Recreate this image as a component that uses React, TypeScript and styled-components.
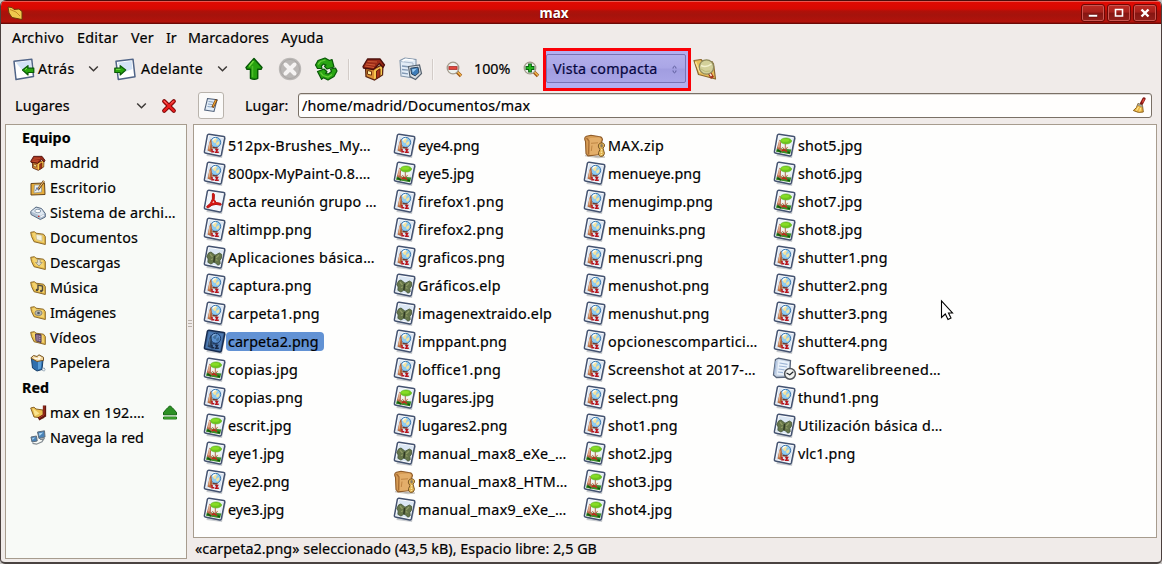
import React from "react";
import styled, { createGlobalStyle } from "styled-components";

const Global = createGlobalStyle`
  *, *::before, *::after { box-sizing: border-box; }
  body { margin: 0; background: #c9c6c4; overflow: hidden; }
  svg { display: block; flex: none; }
`;

const Window = styled.div`
  width: 1162px;
  height: 564px;
  display: flex;
  flex-direction: column;
  background: #f0ebe9;
  border: 1px solid #4a3f3d;
  border-top: 0;
  border-bottom: 2px solid #4a4341;
  border-radius: 6px 6px 5px 5px;
  overflow: hidden;
  font-family: "Noto Sans", "Open Sans", sans-serif;
  font-size: 14.3px;
  line-height: 20px;
  color: #000;
  -webkit-text-stroke: 0.2px currentColor;
`;

const TitleBar = styled.header`
  height: 24px;
  flex: none;
  display: flex;
  align-items: center;
  padding: 1px 5px 0 6px;
  background: linear-gradient(#4a0c0a 0 1px, #e9574f 1px 2px, #e00a02 2px, #d60a03 9px, #b01009 11px, #a5130c 15px, #b4120b 22px, #7a0a06 23px, #5e0805 24px);
`;

const Title = styled.h1`
  flex: 1;
  margin: 0;
  padding-left: 6px;
  text-align: center;
  color: #fff;
  font-size: 13.5px;
  line-height: 20px;
  font-weight: 700;
  -webkit-text-stroke: 0;
  text-shadow: 0 1px 1px #500;
`;

const WindowButton = styled.button`
  width: 24px;
  height: 18px;
  padding: 0;
  margin: 0 0 0 2px;
  position: relative;
  left: 1px;
  display: flex;
  align-items: center;
  justify-content: center;
  border: 1px solid #6d0805;
  border-radius: 3px;
  background: linear-gradient(#bf2b24, #a8211b 45%, #861511 50%, #94201b);
  box-shadow: inset 0 0 0 1px #cb5751;
`;

const MenuBar = styled.nav`
  height: 28px;
  flex: none;
  display: flex;
  align-items: center;
  padding-left: 11px;
`;

const Toolbar = styled.div`
  height: 36px;
  flex: none;
  display: flex;
  align-items: center;
  padding-bottom: 2px;
`;

const LocationRow = styled.div`
  height: 36px;
  flex: none;
  display: flex;
  align-items: center;
  padding-bottom: 1px;
`;

const Text = styled.span<{ $w?: number; $ls?: number; $ml?: number }>`
  flex: none;
  white-space: pre;
  width: ${(p) => (p.$w ? `${p.$w}px` : "auto")};
  margin-left: ${(p) => p.$ml ?? 0}px;
  letter-spacing: ${(p) => p.$ls ?? 0}px;
`;

const Slot = styled.span<{ $ml: number; $w: number }>`
  flex: none;
  display: flex;
  justify-content: center;
  width: ${(p) => p.$w}px;
  margin-left: ${(p) => p.$ml}px;
`;

const Divider = styled.i<{ $ml: number }>`
  width: 2px;
  height: 21px;
  margin-left: ${(p) => p.$ml}px;
  border-left: 1px solid #d3ccc8;
  border-right: 1px solid #f8f5f4;
`;

const Highlight = styled.div`
  width: 148px;
  height: 43px;
  flex: none;
  margin-left: 3px;
  padding: 3px 2px 3px 0;
  border: 3px solid #fb0007;
  background: #b3aff0;
`;

const ViewSelect = styled.div`
  height: 29px;
  width: 140px;
  display: flex;
  align-items: center;
  padding-top: 2px;
  border: 1px solid #7873b5;
  border-radius: 2px;
  background: linear-gradient(#b2aeea, #aaa6e6 48%, #a19de0 52%, #a9a5e6);
  color: #06063f;
`;

const EditToggle = styled.button`
  width: 26px;
  height: 27px;
  padding: 0;
  margin-left: 21px;
  display: flex;
  align-items: center;
  justify-content: center;
  border: 1px solid #b9b3ac;
  border-radius: 3px;
  background: #fbfaf9;
`;

const PathField = styled.div`
  width: 854px;
  height: 25px;
  margin-left: 9px;
  display: flex;
  align-items: center;
  justify-content: space-between;
  padding: 0 4px 0 3px;
  border: 1px solid #7a7066;
  border-radius: 3px;
  background: #fffefd;
  box-shadow: inset 0 1px 0 #dedad6;
`;

const Body = styled.div`
  flex: 1;
  min-height: 0;
  display: flex;
  padding: 0 4px 0 4px;
`;

const Sidebar = styled.aside`
  width: 182px;
  height: 435px;
  border: 1px solid #a79c8e;
  background: #f8faf7;
`;

const Heading = styled.h2`
  height: 25px;
  margin: 0;
  padding-left: 16px;
  font-size: 14.3px;
  line-height: 25px;
  font-weight: 700;
  letter-spacing: 0;
`;

const Place = styled.div`
  height: 25px;
  display: flex;
  align-items: center;
  padding-left: 24px;
`;

const Splitter = styled.div`
  width: 6px;
  height: 399px;
  display: flex;
  flex-direction: column;
  justify-content: center;
  align-items: center;
  gap: 2px;
`;

const Grip = styled.i`
  width: 4px;
  height: 1px;
  background: #b9b1aa;
`;

const Content = styled.main`
  flex: 1;
  display: flex;
  flex-direction: column;
`;

const FilePane = styled.section`
  height: 414px;
  display: flex;
  padding: 7px 0 0 8px;
  border: 1px solid #a79c8e;
  background: #fefefd;
`;

const FileColumn = styled.div`
  width: 190px;
  flex: none;
`;

const FileRow = styled.div`
  height: 28px;
  display: flex;
  align-items: center;
`;

const FileName = styled.span<{ $ls: number; $selected?: boolean }>`
  height: 19px;
  line-height: 19px;
  padding: 0 5px 0 2px;
  margin: 0 0 1px -1px;
  white-space: pre;
  border-radius: 4px;
  letter-spacing: ${(p) => p.$ls}px;
  background: ${(p) => (p.$selected ? "#6292d4" : "transparent")};
`;

const Status = styled.footer`
  height: 22px;
  line-height: 22px;
  padding-left: 2px;
  letter-spacing: 0.05px;
`;

const Pointer = styled.svg`
  position: absolute;
  left: 940px;
  top: 299px;
`;

/* ---------- file icons, 25 x 26 ---------- */

const Sheet = ({ children, dark }: { children?: React.ReactNode; dark?: boolean }) => (
  <svg width="25" height="26" viewBox="0 0 25 26">
    <path d="M7.500 2.500 24 5 20 25 4.500 23Z" fill="#8b929c" opacity=".45" />
    <path d="M7 1.200 21.800 3.500Q23 3.800 22.700 5L19.300 21.900Q19 23.100 17.800 22.900L3.300 20.100Q2.200 19.800 2.400 18.700L5.400 2.200Q5.800 1.100 7 1.200Z" fill={dark ? "#426a9b" : "#fff"} stroke={dark ? "#172c50" : "#435270"} strokeWidth="1.500" />
    <path d="M7 2.900 21.200 5 18 21.300 4 18.700Z" fill={dark ? "#4e7bb4" : "#dbe7f4"} />
    {children}
  </svg>
);

const PngIcon = ({ dark }: { dark?: boolean }) => (
  <Sheet dark={dark}>
    <circle cx="13.700" cy="9.300" r="5" fill={dark ? "#5b91d0" : "#8ecbf2"} stroke={dark ? "#183765" : "#3f78ad"} strokeWidth="1" />
    <path d="M11 6.500l2.500-1.200 2 .7-1.500 2 .5 1.500-2 .5-1.500-1.500zM14 10.500l2.500-2.500 1 2-1.500 2.500-1.500-.5z" fill={dark ? "#43719f" : "#f3e3a0"} />
    <path d="M10.500 7.500q1-2 3.200-2.200" stroke={dark ? "#8ab0da" : "#fff"} fill="none" strokeWidth="1.200" />
    <path d="M9 5.500 7.500 9 5.500 17.500l3.300 1.500 1.700-3.500-.8-5z" fill={dark ? "#28405d" : "#b5653a"} />
    <path d="M8 9.500 7 16.500" stroke={dark ? "#526c8a" : "#e6b083"} strokeWidth="1.300" />
    <path d="M10.500 14.500 14.500 15l1-.6" stroke={dark ? "#243c5f" : "#6b3a2a"} fill="none" strokeWidth="1.300" />
    <path d="M10 16v2.700h2.300M13.200 16.500h2.300l-1.500 2.700h2.800" stroke={dark ? "#192944" : "#b8141b"} fill="none" strokeWidth="1.600" />
  </Sheet>
);

const JpgIcon = () => (
  <Sheet>
    <path d="M7 3.500 20.500 5.500 19 13 5 14z" fill="#eff7fa" />
    <path d="M5 15 19.300 16.500 18 21.300 4 18.700z" fill="#3c8f26" />
    <path d="M9.500 12.500l9 .5-.6 2.800-8-.4z" fill="#f3f3e4" />
    <ellipse cx="14" cy="8" rx="5.600" ry="3" fill="#6cc51e" stroke="#5cb01a" strokeWidth=".6" />
    <ellipse cx="13.200" cy="7.300" rx="4" ry="1.500" fill="#86dc25" />
    <path d="M7.500 6.500 9 10 8.800 15l3 2.500-1.500 1-5.500-3z" fill="#b9694a" />
    <path d="M7.500 8 6.800 14.500" stroke="#e9ba97" strokeWidth="1.300" />
    <path d="M13.300 11v5m-3-2 3 3.500 2.200-3.500" stroke="#b06a50" fill="none" strokeWidth="1" />
    <path d="M10 18.200l2-1.500 3 2" stroke="#c3281d" fill="none" strokeWidth="1.500" />
    <path d="M5.500 17l3.500 2.200m6.500-.2 2.500.8" stroke="#15570e" strokeWidth="1.500" />
  </Sheet>
);

const PdfIcon = () => (
  <Sheet>
    <path d="M7 2.900 21.200 5 18 21.300 4 18.700Z" fill="#f1f5fa" />
    <path d="M10.400 4.700q1.500-1 2 .8l-.2 5 2 3 4.500.8q1.300 1 0 1.900l-4.700-.8-4 .8-3.700 2.600q-1.800.2-1.600-1.300l3.700-3.200 2-4.300z" fill="#d91410" stroke="#b31411" />
    <path d="M11.300 12l-.9 1.700 2-.2z" fill="#fff" />
  </Sheet>
);

const ElpIcon = () => (
  <Sheet>
    <path d="M6.500 8l2.500-1 3.500 2.800 1.300.2 3.500-2 2.500 1.500-.5 4-1.500 2 .4 3.200-2.200 1.500-3-2.700-1.300-.2-2.800 1.700-3-1.700.3-3.300-1.300-2.500z" fill="#66764a" stroke="#48593a" strokeWidth=".9" />
    <path d="M8 9l2.500 3m6.500-2-3 3m-5 1.800 2-1m4.500 1.700-1.500-1" stroke="#919c67" strokeWidth="1.200" />
    <path d="M12.600 11l-.7 6" stroke="#313a25" strokeWidth="1.500" />
  </Sheet>
);

const ZipIcon = () => (
  <svg width="25" height="26" viewBox="0 0 25 26">
    <path d="M3 22.500l13 2 7-.5" stroke="#a9a49a" strokeWidth="1.500" opacity=".6" />
    <path d="M3.500 8.500Q1.500 4.500 4.500 3.300L9 2.200 16.500 3.500Q20 3.500 20.500 6.500L19.500 9.500 18.500 21.500 6 22.800 4 20.500z" fill="#d69c55" stroke="#8f5b28" strokeWidth="1.100" />
    <path d="M7.500 9.500Q5.500 6 8.500 5l8-.5q3 .3 2.500 2.500L17.500 9.500 16.800 21 7.800 22z" fill="#e3ae6a" />
    <path d="M4.500 5l2.500 3-.5 13.500" stroke="#a96d33" fill="none" strokeWidth="1.300" />
    <path d="M9 10.300l7-.5M10 12.500 9.300 18" stroke="#c08643" fill="none" />
    <path d="M16.500 11.500q4-3.500 6 0 .6 2-1.500 3.500l1.500 5.500q-.7 3.500-4 3-2.800-1-2-4l1.500-3q-2.500-2.500-1.500-5z" fill="#e0b252" stroke="#7d5826" />
    <ellipse cx="19.600" cy="12.800" rx="1.300" ry="1.700" fill="#8a7c62" />
    <path d="M19.500 16v6" stroke="#fae69d" strokeWidth="1.500" strokeDasharray="1.500 1" />
  </svg>
);

const DocIcon = () => (
  <svg width="25" height="26" viewBox="0 0 25 26">
    <path d="M3.500 2.500 6.500 1.200 18.500 3.500 17.500 20l-13 .5-3-2.500z" fill="#c8d5e6" stroke="#59667b" strokeWidth="1.300" />
    <path d="M6.500 3l10.700 2-1.300 13.500-11-1z" fill="#eaf2fb" />
    <path d="M7.500 6l8 1.300M7 9l8 1M6.500 12l6 .8M6 15l5 .6M4 4l-1.500 13" stroke="#9db4d4" strokeWidth="1.200" />
    <circle cx="18" cy="16.800" r="5.400" fill="#f3f4f1" stroke="#505459" strokeWidth="1.500" />
    <path d="M14.500 16l3.300 1.800 3.500-3" fill="none" stroke="#24282d" strokeWidth="1.200" />
  </svg>
);

/* ---------- toolbar icons ---------- */

const Chevron = () => (
  <svg width="11" height="8" viewBox="0 0 11 8">
    <path d="M1.200 1.500 5.500 5.700 9.800 1.500" fill="none" stroke="#3d3937" strokeWidth="1.500" />
  </svg>
);

const BackIcon = () => (
  <svg width="22" height="23" viewBox="0 0 22 23">
    <path d="M1 3.300 18.800 1.200 20.500 18.500 3 21.500Z" fill="#fff" stroke="#506487" strokeWidth="1.500" strokeLinejoin="round" />
    <path d="M2.800 4.500 17.500 2.800 18.500 12 10 13z" fill="#d3e3f6" />
    <path d="M9.500 12 15 7.700v2.500h5.800v4.300H15V17z" fill="#29a70e" stroke="#0a5b06" strokeWidth="1.200" strokeLinejoin="round" />
    <path d="M12 11.700l2-1.500" stroke="#7de050" />
  </svg>
);

const ForwardIcon = () => (
  <svg width="22" height="23" viewBox="0 0 22 23">
    <path d="M2 3.300 19 1.200 21 18.800 4.300 21.500Z" fill="#fff" stroke="#506487" strokeWidth="1.500" strokeLinejoin="round" />
    <path d="M3.800 4.700 17.500 3 18.500 11 8 15z" fill="#d3e3f6" />
    <path d="M11.700 12 6.200 7.700v2.500H.800v4.300h5.400V17z" fill="#29a70e" stroke="#0a5b06" strokeWidth="1.200" strokeLinejoin="round" />
    <path d="M2 11.300h4.500" stroke="#7de050" />
  </svg>
);

const UpIcon = () => (
  <svg width="18" height="24" viewBox="0 0 18 24">
    <path d="M9 1.500 17 10.500 16 12.300h-3.300v9q-3.500 2-7.200 0v-9H2L1 10.500z" fill="#27a20f" stroke="#075806" strokeWidth="1.500" strokeLinejoin="round" />
    <path d="M8.500 4 4 9.500" stroke="#72d83e" strokeWidth="1.500" />
    <path d="M7.500 9V20" stroke="#4dbb29" strokeWidth="1.500" />
  </svg>
);

const StopIcon = () => (
  <svg width="24" height="24" viewBox="0 0 24 24">
    <circle cx="12" cy="12" r="11.200" fill="#bab7b5" />
    <circle cx="12" cy="12" r="9.500" fill="none" stroke="#aaa6a4" />
    <path d="M7.500 7.500 16.500 16.500M16.500 7.500 7.500 16.500" stroke="#f5f3f2" strokeWidth="4" strokeLinecap="round" />
  </svg>
);

const ReloadIcon = () => (
  <svg width="24" height="24" viewBox="0 0 24 24">
    <g fill="#29a513" stroke="#075806" strokeWidth="1.200" strokeLinejoin="round">
      <path d="M1.500 8 4 3.500 11 1 15.500 3.500 18 2.500 20 10 13 12 10.500 9.300 12 8 9.500 7 7.300 9 8 11.500 3.500 11.500z" />
      <path d="M23 14 20 19.500 14 23 9.500 20.800 7.500 22.300 3.500 14.500 10 12 13 14.800 11.500 16.300 14.500 17 17.500 14.500 16.500 12 21.500 11z" />
    </g>
    <path d="M4 7.500 6.500 4.500l5-1.500M6.500 15.500l2.500 3 5 1.500 4-2.500" stroke="#68cc3a" strokeWidth="1.200" fill="none" />
  </svg>
);

const HomeIcon = ({ size = 24 }: { size?: number }) => (
  <svg width={size} height={size} viewBox="0 0 24 24">
    <path d="M3.500 10 11 12 21 7.500l-.5 10.500-8 5L4 19.500z" fill="#d98f35" stroke="#5b2510" strokeWidth="1.300" />
    <path d="M12 13.500 20 9V17.500l-8 4.700z" fill="#f7c94f" />
    <path d="M1 9.500 5.500 2h12.500l4.500 6-1.500 2.500L17.500 6.500l-6 6L1.500 11z" fill="#9a2a18" stroke="#4c100b" strokeWidth="1.300" strokeLinejoin="round" />
    <path d="M5.500 4.500 15 5M4 7l9 1.200M3 9l9 1.500" stroke="#cd5a36" strokeWidth="1.200" />
    <path d="M5.500 13.500l4 1v3.700l-4-1z" fill="#fff1a0" stroke="#70310d" />
    <path d="M14.500 14 18 11.800v7.700l-3.500 2z" fill="#a83318" stroke="#68200d" />
  </svg>
);

const ComputerIcon = () => (
  <svg width="25" height="24" viewBox="0 0 25 24">
    <path d="M2 3.500 7 1l11 1.500v15L15 21l-12-2z" fill="#e2ecf6" stroke="#8396ab" strokeWidth="1.100" />
    <path d="M2.500 4.500 15 6v14" stroke="#a9bacd" fill="none" />
    <path d="M4 9l8 1M4 12.500l6 .7M4 16l6 .8" stroke="#8299b4" strokeWidth="1.300" />
    <path d="M4.500 4 7.500 2.300l8 1" stroke="#fff" fill="none" strokeWidth="1.500" />
    <path d="M10.500 9.500 21.500 8 23.500 16.500 17.500 22.500 12 19.500z" fill="#d9dee2" stroke="#56626f" strokeWidth="1.200" />
    <path d="M12.700 11.200 20 10.200 21 15.500 17.200 18.800 13.600 17z" fill="#3d7cb8" stroke="#29445e" />
    <path d="M14 12.200l5-.6-4.300 4z" fill="#9bccf2" />
  </svg>
);

const ZoomIcon = ({ plus }: { plus?: boolean }) => (
  <svg width="17" height="17" viewBox="0 0 17 17">
    <path d="M10.500 10.500 15 15" stroke="#9c5515" strokeWidth="3.300" />
    <path d="M11.500 11 15 14.500" stroke="#f5b84c" strokeWidth="1.600" />
    <circle cx="7" cy="7" r="5.800" fill="#edf2ee" stroke="#a29b8c" strokeWidth="1.300" />
    {plus ? (
      <>
        <path d="M7 2.500v9M2.500 7h9" stroke="#0a6210" strokeWidth="3.800" />
        <path d="M7 3.500v7M3.500 7h7" stroke="#23b61d" strokeWidth="2" />
      </>
    ) : (
      <>
        <path d="M2.500 7h9" stroke="#a61b18" strokeWidth="3.600" />
        <path d="M3.300 7h7.400" stroke="#f05548" strokeWidth="1.600" />
      </>
    )}
  </svg>
);

const SearchFolderIcon = () => (
  <svg width="24" height="24" viewBox="0 0 24 24">
    <path d="M1 3.500 8 2.500 10.500 5 19 4.500 20.500 7 22.500 22 5.500 17.500z" fill="#e9c05a" stroke="#8d672c" strokeWidth="1.200" strokeLinejoin="round" />
    <path d="M2.500 5 7 15.500" stroke="#fbe49a" strokeWidth="1.500" />
    <path d="M16.500 16 19.500 21" stroke="#a5351f" strokeWidth="3.600" />
    <path d="M16.800 16.500 18.500 19" stroke="#f6ead8" strokeWidth="1.500" />
    <circle cx="13.500" cy="10" r="7.200" fill="#d3d09a" stroke="#8e8a5e" strokeWidth="1.300" />
    <path d="M8 8.500q5 2.500 10.500-1.500" stroke="#f4f1cf" strokeWidth="1.500" fill="none" />
    <path d="M8 12q4 4 9 2" stroke="#bcbd78" fill="none" />
  </svg>
);

const CloseIcon = () => (
  <svg width="16" height="16" viewBox="0 0 16 16">
    <path d="M3.200 3.200 12.800 12.800M12.800 3.200 3.200 12.800" stroke="#7f0909" strokeWidth="4.200" strokeLinecap="round" />
    <path d="M3.200 3.200 12.800 12.800M12.800 3.200 3.200 12.800" stroke="#ec1f1f" strokeWidth="2.300" strokeLinecap="round" />
    <path d="M3 2.800 6 5.800M12.500 3 10 5.500" stroke="#ff9790" strokeWidth=".8" />
  </svg>
);

const NoteIcon = () => (
  <svg width="16" height="17" viewBox="0 0 16 17">
    <path d="M4.500 1.500 14 2.700 11 14.500 1.700 13z" fill="#e2edf8" stroke="#52637c" strokeWidth="1.100" />
    <path d="M5.500 4.500l5 .7M5 7l4.500.6M4.500 9.500l4 .5" stroke="#87a1c0" />
    <path d="M13.500 2.500 9.500 10.500" stroke="#6b3c10" strokeWidth="2.600" />
    <path d="M13 3.200 10 9.500" stroke="#efa535" strokeWidth="1.300" />
  </svg>
);

const BroomIcon = () => (
  <svg width="15" height="17" viewBox="0 0 15 17">
    <path d="M12 1.800 9.500 6.500" stroke="#831a16" strokeWidth="3.200" strokeLinecap="round" />
    <path d="M12 2 10.500 5.500" stroke="#e3483a" strokeWidth="1.400" />
    <path d="M6 6.500l4.500 2 .8 6.500q-5 1.500-10-1.500 3.700-2 4.700-7z" fill="#edb746" stroke="#8e6521" />
    <path d="M6 6.500l4.500 2v1.700L5.500 8z" fill="#b9b8ac" stroke="#756e60" strokeWidth=".5" />
    <path d="M6.500 10 4.500 13.500m4-2.500-.7 3.500" stroke="#fff0a0" />
  </svg>
);

/* ---------- sidebar icons, 16 x 16 ---------- */

const FolderIcon = ({ children }: { children?: React.ReactNode }) => (
  <svg width="16" height="16" viewBox="0 0 16 16">
    <path d="M.700 2.300 4.500 1.700 6 3.200 13.500 4.200 15.300 6.500V14.500L4 11.700 1.500 6.500z" fill="#e8bd49" stroke="#8d6a2b" strokeLinejoin="round" />
    <path d="M2 3.500 4.500 2.800 6 4.400 13 5.300 14.200 12.700 5.500 10.500z" fill="#f3d373" />
    {children}
  </svg>
);

const DesktopIcon = () => (
  <svg width="16" height="16" viewBox="0 0 16 16">
    <path d="M1 3.500 14.500 3 15 14.500 1 15z" fill="#e5ac3b" stroke="#694519" />
    <path d="M4.500 5h7v7L4 13z" fill="#eef0ea" stroke="#8a9293" strokeWidth=".7" />
    <path d="M14 1 8 9.500" stroke="#704519" strokeWidth="2.300" />
    <path d="M14 1 8.500 8.500" stroke="#f5cb82" />
    <path d="M5.500 11l1.500-3.500 1.500 3" stroke="#667cad" fill="none" />
  </svg>
);

const DriveIcon = () => (
  <svg width="16" height="16" viewBox="0 0 16 16">
    <path d="M.700 6.500 6 2 11.500 3.500 15.300 8.500V12l-5 2.500L1 9.500z" fill="#b0c0d2" stroke="#596b82" strokeLinejoin="round" />
    <path d="M1.300 6.500 6 3l5.200 1.300 3 4.200-4 2.200z" fill="#e0e9f2" />
    <ellipse cx="7.800" cy="6" rx="3" ry="1.700" fill="#fff" stroke="#8ea0b3" />
    <path d="M10.500 12l3.500-2" stroke="#f3f6f9" strokeWidth="1.200" />
    <path d="M8 11.300h1.500" stroke="#cb2f27" strokeWidth="1.300" />
  </svg>
);

const TrashIcon = () => (
  <svg width="16" height="18" viewBox="0 0 16 18">
    <path d="M1.500 5 13 6l-1 9.500-5 1.500-4.500-3z" fill="#2f6fae" stroke="#173f6b" />
    <path d="M8 7l3.500-.5-.7 8-2.800 1z" fill="#5c9fd8" />
    <path d="M.800 4 3.500 1.500 7 2.500 9 .800l4.500 2.500v3L7 7.500z" fill="#f2d69b" stroke="#775323" />
    <path d="M4 4l4 1 3-1.500M9 2v4" stroke="#fff" fill="none" />
    <path d="M12 14.500q3-1.500 3 1t-3 .5" stroke="#97a8b8" fill="none" />
  </svg>
);

const RemoteIcon = () => (
  <svg width="17" height="16" viewBox="0 0 17 16">
    <path d="M.700 3 4 2.200 6 4l7 1 .5 8L4 12z" fill="#eac052" stroke="#886124" />
    <path d="M3 3.500 9.500 8.500 5 11z" fill="#fae48f" />
    <path d="M14.500 .500v10L8.500 14" stroke="#60170f" strokeWidth="3.300" fill="none" />
    <path d="M14 1v9L9 13" stroke="#b53625" fill="none" />
  </svg>
);

const NetworkIcon = () => (
  <svg width="16" height="16" viewBox="0 0 16 16">
    <path d="M7.500 2 14.500.800 15 7 9 8.500z" fill="#4a83b8" stroke="#5f6d7b" />
    <path d="M9 3.300l4.200-.8L9.500 6z" fill="#add8f5" />
    <path d="M1 7l5.500-1 .7 5L2 12z" fill="#4a83b8" stroke="#5f6d7b" />
    <path d="M2.300 8l3-.6-2.800 2.500z" fill="#add8f5" />
    <path d="M10 9.500l4-.8-2 3-5.500 2.500-4-.8" fill="none" stroke="#838b91" strokeWidth="1.200" />
  </svg>
);

const EjectIcon = () => (
  <svg width="16" height="16" viewBox="0 0 16 16">
    <path d="M8 1q1.200 0 6.500 6.500v2.300h-13V7.500Q6.800 1 8 1z" fill="#2c8f24" stroke="#0c5f09" strokeLinejoin="round" />
    <path d="M1.500 12h13v2h-13z" fill="#50bc39" stroke="#20791a" />
  </svg>
);

type Kind = "png" | "jpg" | "pdf" | "elp" | "zip" | "doc";

const fileIcons: Record<Kind, React.ComponentType> = {
  png: PngIcon,
  jpg: JpgIcon,
  pdf: PdfIcon,
  elp: ElpIcon,
  zip: ZipIcon,
  doc: DocIcon,
};

/* name, kind, letter spacing where it differs from the default */
const columns: [string, Kind, number?][][] = [
  [
    ["512px-Brushes_My…", "png", 0.34],
    ["800px-MyPaint-0.8.…", "png", 0.14],
    ["acta reunión grupo …", "pdf", 0.24],
    ["altimpp.png", "png"],
    ["Aplicaciones básica…", "elp", 0.32],
    ["captura.png", "png"],
    ["carpeta1.png", "png"],
    ["carpeta2.png", "png", 0.12],
    ["copias.jpg", "jpg"],
    ["copias.png", "png"],
    ["escrit.jpg", "jpg"],
    ["eye1.jpg", "jpg", 0],
    ["eye2.png", "png", 0],
    ["eye3.jpg", "jpg", 0],
  ],
  [
    ["eye4.png", "png", 0],
    ["eye5.jpg", "jpg", 0],
    ["firefox1.png", "png", 0.38],
    ["firefox2.png", "png", 0.38],
    ["graficos.png", "png", 0.28],
    ["Gráficos.elp", "elp", 0.28],
    ["imagenextraido.elp", "elp"],
    ["imppant.png", "png"],
    ["loffice1.png", "png", 0.33],
    ["lugares.jpg", "jpg", 0.1],
    ["lugares2.png", "png", 0.1],
    ["manual_max8_eXe_…", "elp", 0.35],
    ["manual_max8_HTM…", "zip", 0.4],
    ["manual_max9_eXe_…", "elp", 0.35],
  ],
  [
    ["MAX.zip", "zip", 0.4],
    ["menueye.png", "png", 0.05],
    ["menugimp.png", "png", 0.08],
    ["menuinks.png", "png", 0.1],
    ["menuscri.png", "png"],
    ["menushot.png", "png"],
    ["menushut.png", "png"],
    ["opcionescompartici…", "png", 0.37],
    ["Screenshot at 2017-…", "png", 0.18],
    ["select.png", "png", 0.15],
    ["shot1.png", "png"],
    ["shot2.jpg", "jpg"],
    ["shot3.jpg", "jpg"],
    ["shot4.jpg", "jpg"],
  ],
  [
    ["shot5.jpg", "jpg"],
    ["shot6.jpg", "jpg"],
    ["shot7.jpg", "jpg"],
    ["shot8.jpg", "jpg"],
    ["shutter1.png", "png"],
    ["shutter2.png", "png"],
    ["shutter3.png", "png"],
    ["shutter4.png", "png"],
    ["Softwarelibreened…", "doc", 0.48],
    ["thund1.png", "png"],
    ["Utilización básica d…", "elp", 0.26],
    ["vlc1.png", "png", 0.15],
  ],
];

const selectedFile = "carpeta2.png";

const places: { name: string; icon: React.ReactNode; ls?: number }[] = [
  { name: "madrid", icon: <HomeIcon size={16} />, ls: 0.1 },
  { name: "Escritorio", icon: <DesktopIcon />, ls: 0.3 },
  { name: "Sistema de archi…", icon: <DriveIcon />, ls: 0.24 },
  { name: "Documentos", ls: 0.25, icon: <FolderIcon><path d="M6 4.500l6 .7v6L6.500 9.500z" fill="#f5f2df" stroke="#b8ab82" strokeWidth=".6" /></FolderIcon> },
  { name: "Descargas", ls: 0.1, icon: <FolderIcon><path d="M7.500 4.500h2.700v3h2L9 11 5.500 7.500h2z" fill="#dddbd0" stroke="#8f8974" strokeWidth=".7" /></FolderIcon> },
  { name: "Música", ls: 0.15, icon: <FolderIcon><path d="M8 10V5l4.500 1v5" fill="none" stroke="#514b3f" strokeWidth="1.400" /><circle cx="7" cy="10" r="1.300" fill="#514b3f" /><circle cx="11.300" cy="11" r="1.300" fill="#514b3f" /></FolderIcon> },
  { name: "Imágenes", ls: -0.1, icon: <FolderIcon><ellipse cx="8.500" cy="8" rx="3.600" ry="2.600" fill="#bbb9ae" stroke="#79776d" strokeWidth=".8" /><circle cx="8.500" cy="8" r="1.300" fill="#4d5764" /></FolderIcon> },
  { name: "Vídeos", ls: 0.3, icon: <FolderIcon><path d="M5.500 4l5.500.8v7.700l-5-1.700z" fill="#806486" stroke="#4d3957" /><path d="M7 5.500v5m2.800-4.500v5" stroke="#b8a1bc" strokeDasharray="1 1" /></FolderIcon> },
  { name: "Papelera", icon: <TrashIcon />, ls: 0.15 },
];

export default function App() {
  return (
    <>
      <Global />
      <Window>
        <TitleBar>
          <svg width="17" height="16" viewBox="0 0 17 16">
            <path d="M1 2 5 2.500 7 4.500l5-.5L15 6.500v8L5 12.500 2 8z" fill="#efc94d" stroke="#6c3b08" strokeLinejoin="round" />
            <path d="M3 4.500l6 2.500 4 4" stroke="#c58d26" fill="none" />
          </svg>
          <Title>max</Title>
          <WindowButton>
            <svg width="10" height="10" viewBox="0 0 10 10"><path d="M.500 6.500h9v2.500h-9z" fill="#fff" stroke="#500" strokeWidth=".5" /></svg>
          </WindowButton>
          <WindowButton>
            <svg width="10" height="10" viewBox="0 0 10 10"><path d="M1.500 1.500h7v6.500h-7z" fill="none" stroke="#fff" strokeWidth="1.600" /></svg>
          </WindowButton>
          <WindowButton>
            <svg width="10" height="10" viewBox="0 0 10 10"><path d="M1.500 1.500 8.500 8.500M8.500 1.500 1.500 8.500" stroke="#fff" strokeWidth="2.400" /></svg>
          </WindowButton>
        </TitleBar>

        <MenuBar>
          <Text $w={65} $ls={0.3}>Archivo</Text>
          <Text $w={54} $ls={0.3}>Editar</Text>
          <Text $w={35} $ls={0.2}>Ver</Text>
          <Text $w={22}>Ir</Text>
          <Text $w={93} $ls={0.15}>Marcadores</Text>
          <Text $ls={0.1}>Ayuda</Text>
        </MenuBar>

        <Toolbar>
          <Slot $ml={12} $w={22}><BackIcon /></Slot>
          <Text $ml={3} $w={50} $ls={0.4}>Atrás</Text>
          <Slot $ml={0} $w={11}><Chevron /></Slot>
          <Slot $ml={15} $w={22}><ForwardIcon /></Slot>
          <Text $ml={5} $w={75} $ls={0.3}>Adelante</Text>
          <Slot $ml={1} $w={11}><Chevron /></Slot>
          <Slot $ml={17} $w={18}><UpIcon /></Slot>
          <Slot $ml={15} $w={24}><StopIcon /></Slot>
          <Slot $ml={12} $w={24}><ReloadIcon /></Slot>
          <Divider $ml={10} />
          <Slot $ml={12} $w={24}><HomeIcon /></Slot>
          <Slot $ml={12} $w={25}><ComputerIcon /></Slot>
          <Divider $ml={9} />
          <Slot $ml={12} $w={17}><ZoomIcon /></Slot>
          <Text $ml={11} $w={48}>100%</Text>
          <Slot $ml={1} $w={17}><ZoomIcon plus /></Slot>
          <Highlight>
            <ViewSelect>
              <Text $ml={6} $w={119} $ls={0.2}>Vista compacta</Text>
              <svg width="5" height="9" viewBox="0 0 5 9">
                <path d="M1 3.500V2.500L2.500 1.200 4 2.500v1M1 5.500v1L2.500 7.800 4 6.500v-1" fill="none" stroke="#50508e" strokeWidth=".9" />
              </svg>
            </ViewSelect>
          </Highlight>
          <Slot $ml={2} $w={24}><SearchFolderIcon /></Slot>
        </Toolbar>

        <LocationRow>
          <Text $ml={14} $w={120} $ls={0.15}>Lugares</Text>
          <Slot $ml={1} $w={11}><Chevron /></Slot>
          <Slot $ml={14} $w={16}><CloseIcon /></Slot>
          <EditToggle><NoteIcon /></EditToggle>
          <Text $ml={21} $w={44} $ls={0.1}>Lugar:</Text>
          <PathField>
            <Text $ls={0.18}>/home/madrid/Documentos/max</Text>
            <BroomIcon />
          </PathField>
        </LocationRow>

        <Body>
          <Sidebar>
            <Heading>Equipo</Heading>
            {places.map((p) => (
              <Place key={p.name}>
                {p.icon}
                <Text $ml={4} $ls={p.ls}>{p.name}</Text>
              </Place>
            ))}
            <Heading>Red</Heading>
            <Place>
              <RemoteIcon />
              <Text $ml={3} $w={112} $ls={0.15}>max en 192.…</Text>
              <EjectIcon />
            </Place>
            <Place>
              <NetworkIcon />
              <Text $ml={4} $ls={0.1}>Navega la red</Text>
            </Place>
          </Sidebar>
          <Splitter><Grip /><Grip /><Grip /></Splitter>
          <Content>
            <FilePane>
              {columns.map((files, i) => (
                <FileColumn key={i}>
                  {files.map(([name, kind, ls]) => {
                    const Icon = fileIcons[kind];
                    const selected = name === selectedFile;
                    return (
                      <FileRow key={name}>
                        {selected ? <PngIcon dark /> : <Icon />}
                        <FileName $ls={ls ?? 0.2} $selected={selected}>{name}</FileName>
                      </FileRow>
                    );
                  })}
                </FileColumn>
              ))}
            </FilePane>
            <Status>«carpeta2.png» seleccionado (43,5 kB), Espacio libre: 2,5 GB</Status>
          </Content>
        </Body>
      </Window>
      <Pointer width="16" height="24" viewBox="0 0 16 24">
        <path d="M1.500 2V18.500l3.800-3.500 2.700 5.500 3-1.400-2.500-5.100H12.500z" fill="#fff" stroke="#000" strokeWidth="1.100" />
      </Pointer>
    </>
  );
}
